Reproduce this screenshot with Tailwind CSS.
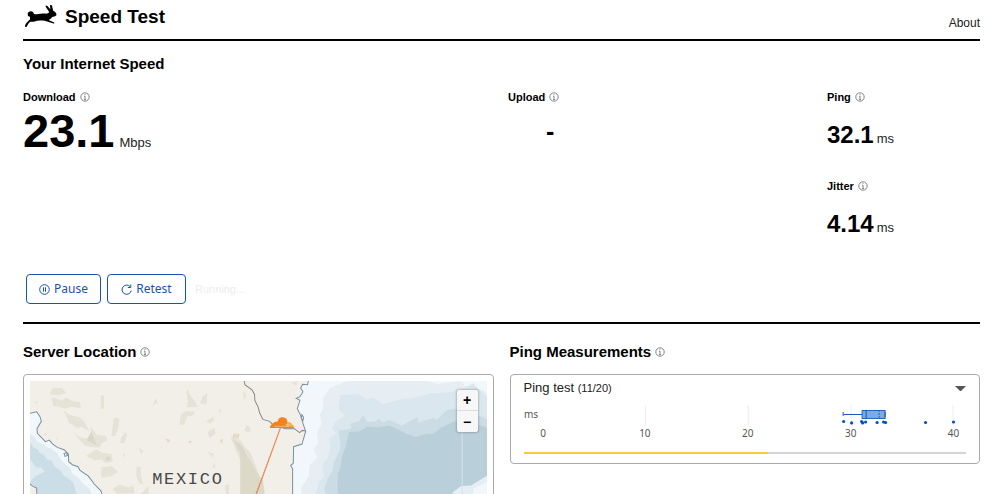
<!DOCTYPE html>
<html lang="en">
<head>
<meta charset="utf-8">
<meta name="viewport" content="width=device-width, initial-scale=1">
<title>Speed Test</title>
<script src="https://cdn.jsdelivr.net/npm/@tailwindcss/browser@4"></script>
</head>
<body class="flex h-screen flex-col overflow-hidden bg-white pl-[23px] pr-5 font-['Liberation_Sans',sans-serif] text-black">
<svg class="hidden">
  <symbol id="info" viewBox="0 0 10 10"><circle cx="5" cy="5" r="4.2" fill="none" stroke="#777" stroke-width=".9"/><path d="M5 4.2V7.6M4.1 4.3H5M4 7.6H6M5 2.2V3.2" fill="none" stroke="#777" stroke-width=".9"/></symbol>
</svg>
<header class="flex h-[41px] shrink-0 items-start justify-between border-b-2 border-black">
  <a href="#" class="flex items-center gap-2 pt-1">
    <svg class="h-6 w-[34px]" viewBox="0 0 102 72"><path fill="#000" d="M6 63C8 55 14 50 21 43L21 35C14 36 11 25 18 20C25 16 32 20 33 27C45 29 58 25 69 26C74 26 76 24 79 22L68 5C67 0 71 1 74 4L82 13L81 0C83-2 88 1 88 7L91 18C97 20 102 27 100 31C97 35 91 35 87 37C84 42 80 44 77 45L90 51C97 53 95 57 89 55L65 47C56 46 45 46 39 48C32 52 26 49 21 51C16 55 14 61 11 65C8 67 5 66 6 63Z"/></svg>
    <h1 class="pt-px text-[19px] leading-6 font-bold">Speed Test</h1>
  </a>
  <a href="#about" class="pt-[15px] text-[12px] leading-4 text-[#222]">About</a>
</header>
<main class="flex min-h-0 flex-1 flex-col">
  <section class="shrink-0">
    <h2 class="pt-[13px] text-[15px] leading-5 font-bold">Your Internet Speed</h2>
    <div class="grid h-[184px] grid-cols-[485fr_319fr_153fr] pt-[15px]">
      <div>
        <h3 class="flex items-center gap-1 text-[11px] leading-4 font-bold">Download <svg class="size-[10px]"><use href="#info"/></svg></h3>
        <p class="flex items-baseline gap-[5px] pt-[2px] leading-[48px]"><strong class="text-[47px]">23.1</strong><span class="text-[13px] text-[#222]">Mbps</span></p>
      </div>
      <div>
        <h3 class="flex items-center gap-1 text-[11px] leading-4 font-bold">Upload <svg class="size-[10px]"><use href="#info"/></svg></h3>
        <p class="pt-2 pl-[38px] text-[25px] leading-9 font-bold">-</p>
      </div>
      <div>
        <h3 class="flex items-center gap-1 text-[11px] leading-4 font-bold">Ping <svg class="size-[10px]"><use href="#info"/></svg></h3>
        <p class="flex h-[73px] items-baseline gap-[3px] pt-[10px] leading-10"><strong class="text-[24px]">32.1</strong><span class="text-[13px] text-[#222]">ms</span></p>
        <h3 class="flex items-center gap-1 text-[11px] leading-4 font-bold">Jitter <svg class="size-[10px]"><use href="#info"/></svg></h3>
        <p class="flex items-baseline gap-[3px] pt-[10px] leading-10"><strong class="text-[24px]">4.14</strong><span class="text-[13px] text-[#222]">ms</span></p>
      </div>
    </div>
    <div class="flex h-[66px] items-start gap-[6px] border-b-2 border-black pt-4 pl-[3px] text-[12px] text-[#1455ad]">
      <button class="flex h-[30px] w-[75px] items-center justify-center gap-1 rounded border border-[#1455ad] font-['Noto_Sans',sans-serif]">
        <svg class="size-[11px]" viewBox="0 0 11 11" fill="none" stroke="currentColor"><circle cx="5.500" cy="5.500" r="4.800"/><path d="M4.500 3.300V7.700M6.500 3.300V7.700"/></svg>Pause</button>
      <button class="flex h-[30px] w-[79px] items-center justify-center gap-1 rounded border border-[#1455ad] font-['Noto_Sans',sans-serif]">
        <svg class="size-[11px]" viewBox="0 0 11 11" fill="none" stroke="currentColor"><path d="M9 2.500A4.600 4.600 0 1 0 10.200 6.500M9.800.5V3.500H6.800"/></svg>Retest</button>
      <span class="pl-[3px] text-[11px] leading-[30px] text-[#ededed]">Running...</span>
    </div>
  </section>
  <div class="grid min-h-0 flex-1 grid-cols-2 gap-4 overflow-hidden pt-[18px]">
    <section class="min-h-0 overflow-hidden">
      <h2 class="flex items-center gap-1 text-[15px] leading-5 font-bold">Server Location <svg class="size-[10px]"><use href="#info"/></svg></h2>
      <div class="relative mt-3 rounded border border-[#aaa] p-[6px]">
        <svg class="block w-full" viewBox="0 0 456 240" preserveAspectRatio="xMinYMin slice" role="img" aria-label="Map of Mexico and the Gulf">
          <rect width="456" height="240" fill="#f2efe8"/>
          <g transform="translate(-10 -11) scale(.33333)">
            <g fill="#e5e2d7">
              <path d="M98 54h28l12 14-20 8-30-3zM94 82l12 2 18 8 14-10 20 12 22 2 2 18-30-4-16 6-20-6-16-2zM130 120l18 14 30 8 16 14 14 28-24-14-12 4-26-16-8-22zM160 184l20 18 22 4 12-16-4-22 20 26 28 4 4 14-16 6-8 14-26-2-18-4-16-18zM242 76h10v40h-10zM282 142l16 4-4 28-8 24h-12l4-30zM303 202l14-16 4 8-8 24-12 2zM228 238l20 10 26 4 4 24-26 2-6-10-22 2-26-12zM244 292l30-4 20 18-24 14-26 2zM278 356l20-12 26 8 16-6 4 24h-54zM502 58l10 20 12 16 10 16-34 2 4-20-6-24zM548 78l14-8-4 34-18-4zM398 104l10-20 4 16zM478 164l4-30 16-12 26 4-6 10-18 4-8 24zM350 288l12 4v26l8 24-12-2-10-22zM356 232l14 12-8 8zM562 186l20-12 4 16-18 14zM560 244l22 8-4 10zM576 294l8-16 2 14zM558 154l20-14 4 10-12 10zM614 346l12-4v30h-8zM678 164l14 8-4 16-16-6zM594 116l10 4-2 10zM668 64l10 10-6 18zM44 96l10-2-4 8zM362 372l22-24 2 24zM310 250l6 6-8 6zM108 206l8-6-4 10zM70 192l12-4-6 10z"/>
              <path d="M630 200l30 10 16 24 14 12 30 76v50l-20-20-10-24-18-22-16-46-12-26z"/>
            </g>
            <path fill="#d9d6ca" d="M640 208l26 20 24 54-34-40zM200 210l14-26 12 34 8 10zM258 260h12v10h-12z"/>
            <path fill="#e5dac6" d="M640 190l18 2-2 14-20-2zM434 204l16 6-6 8zM598 210l10-4-2 16zM504 212l14 2-10 6z"/>
            <path fill="#f2f7fb" d="M30 130L50 125L60 140L64 154L51 176L52 190L69 207L76 215L88 210L98 222L112 232L132 239L145 252L146 275L157 284L174 290L180 301L205 318L222 341L243 363L250 390H30Z"/>
            <path fill="#dfebf1" d="M30 190L46 202L52 216L70 222L82 232L95 236L112 250L123 270L138 285L151 294L158 312L174 322L190 342L210 358L218 385H30Z"/>
            <path fill="#cbdde6" d="M30 218L42 234L54 238L58 248L70 252L80 268L95 272L104 290L122 302L132 318L146 326L160 338L165 360L180 390H60L48 354L30 336L44 320L74 304L64 292L50 292L36 276L30 268Z"/>
            <path fill="#f2efe8" stroke="#78909f" stroke-width="3" d="M28 340L38 348L50 354L51 390H28Z"/>
            <path fill="none" stroke="#78909f" stroke-width="3" d="M30 130L50 125L60 140L64 154L51 176L52 190L69 207L76 215L88 210L98 222L112 232L132 239L145 252L146 275L157 284L174 290L180 301L205 318L222 341L243 363L250 390M132 250L140 248L142 256L135 259Z"/>
          </g>
          <g transform="translate(220 -11) scale(.33333)">
            <path fill="#f2f7fb" d="M174 33H720V740H130L127 390L128 300L121 286L130 280L129 229L150 222L166 184L158 160L141 116L149 80L157 48L172 44Z"/>
            <path fill="#e6eef3" d="M290 33L240 53L218 84L218 118L208 135L214 160L200 188L204 218L188 238L202 260L177 286L176 316L155 350L150 390L150 740H720V80L700 62L650 52L630 33L560 42L530 33Z"/>
            <path fill="#dbe7ee" d="M270 76L325 72L348 88L370 84L400 102L450 88L490 84L540 70L600 67L640 55L668 40L708 82H720V740H190L180 390L198 365L206 336L221 318L214 288L232 264L240 230L236 204L258 188L244 176L252 158L282 138L264 116Z"/>
            <path fill="#cbdce5" d="M264 182L302 176L300 160L325 154L338 136L352 156L376 154L386 146L398 158L416 150L454 166L500 142L506 158L520 152L550 144L558 150L590 120L620 115L720 150V740H235L232 390L222 356L232 326L246 302L252 276L270 238L270 216Z"/>
            <path fill="#b9d0db" d="M296 186L326 184L350 170L384 172L416 166L446 180L466 190L496 201L530 190L548 192L572 172L610 155L646 150L708 173H720V740H265L262 310L270 292L276 258L286 230Z"/>
            <path fill="#e4eef4" d="M720 312L704 320L688 330L662 346L632 348L608 366L600 390V740H720Z"/><path fill="#f2f7fb" d="M720 332L690 345L670 355L662 390V740H720Z"/>
            <path fill="#dcd9c9" d="M-30 240L0 270L18 305L38 330L46 390H-30Z"/><path fill="#e5e2d7" d="M124 38l18-4-4 14z"/>
            <path fill="none" stroke="#78909f" stroke-width="3" d="M174 33L172 44L157 43L151 54L158 65L149 80L138 85L149 91L141 116L150 134L158 160L166 184L155 222L130 230L129 280L121 286L127 296L127 740M155 134L160 142L158 151L153 145Z"/>
            <path fill="none" stroke="#8b8985" stroke-width="3" d="M-18 33L-16 44L6 60L13 74L14 92L24 112L28 128L38 148L58 154L68 164L106 176L132 176L148 188L156 181L166 183"/>
            <path stroke="#f0905e" stroke-width="4" d="M91 172L18 372L-90 660"/>
            <path stroke="#d7e3ea" stroke-width="3" d="M635 185V740"/>
            <path fill="#fbad41" d="M104 172L112 156Q122 154 126 164Q132 164 131 174H104Z"/><path fill="#f6821f" d="M59 174C60 162 68 163 69 159C74 153 80 155 83 154C82 139 107 137 110 150C114 158 109 163 106 169L131 171V174Z"/><path fill="none" stroke="#f7c899" stroke-width="2" d="M73 169H117M113 157V168M106 163L118 164"/>
          </g>
          <text x="122" y="103" fill="#484848" class="font-['Liberation_Mono',monospace] text-[17px] tracking-widest">MEXICO</text>
        </svg>
        <div class="absolute top-[15px] right-[15px] flex w-[21px] flex-col rounded-xs bg-[#f7f7f7] text-[14px] leading-5 font-bold shadow-[0_0_2px_1px_#0003]">
          <button class="h-[21px] border-b border-[#ddd]" aria-label="Zoom in">+</button>
          <button class="h-[21px]" aria-label="Zoom out">−</button>
        </div>
      </div>
    </section>
    <section>
      <h2 class="flex items-center gap-1 text-[15px] leading-5 font-bold">Ping Measurements <svg class="size-[10px]"><use href="#info"/></svg></h2>
      <div class="mt-3 h-[90px] rounded border border-[#aaa] px-[13px] pt-[3px]">
        <button class="flex w-full items-center justify-between text-[13px] leading-5 text-[#222]" aria-expanded="false"><span>Ping test <span class="text-[11px]">(11/20)</span></span><svg class="h-[5px] w-[11px]" viewBox="0 0 11 5"><path d="M0 0H11L6 5H5Z" fill="#555"/></svg></button>
        <svg class="mt-px block w-full" viewBox="0 0 443 55" role="img" aria-label="Ping distribution in milliseconds">
          <path stroke="#eee" d="M121.500 6V27M224.500 6V27M327.500 6V27M429.500 6V27"/>
          <g class="font-['Noto_Sans',sans-serif] text-[10px]" fill="#555"><text x="0" y="19">ms</text><g text-anchor="middle"><text x="19" y="38">0</text><text x="121" y="38">10</text><text x="224" y="38">20</text><text x="327" y="38">30</text><text x="430" y="38">40</text></g></g>
          <path fill="none" stroke="#1455bd" d="M319.500 13V17M320 15.500H339"/>
          <rect x="338.500" y="11.500" width="23" height="8" fill="#7ea9e1" stroke="#2764bd"/><path stroke="#1455bd" d="M342.500 11V20M361.500 13V18"/><path stroke="#2764bd" stroke-dasharray="2 1" d="M355.500 11V20"/>
          <g fill="#0051c3"><circle cx="320" cy="22.500" r="1.600"/><circle cx="328" cy="24" r="1.600"/><circle cx="338" cy="22.500" r="1.600"/><circle cx="339" cy="24" r="1.600"/><circle cx="342" cy="23" r="1.600"/><circle cx="353.500" cy="23.500" r="1.600"/><circle cx="360" cy="23" r="1.600"/><circle cx="362" cy="23.500" r="1.600"/><circle cx="402" cy="23.500" r="1.600"/><circle cx="430" cy="23" r="1.600"/></g>
          <path stroke="#d5d5d5" stroke-width="2" d="M0 54H443"/><path stroke="#fbc935" stroke-width="2" d="M0 54H244"/>
        </svg>
      </div>
    </section>
  </div>
</main>
</body>
</html>
